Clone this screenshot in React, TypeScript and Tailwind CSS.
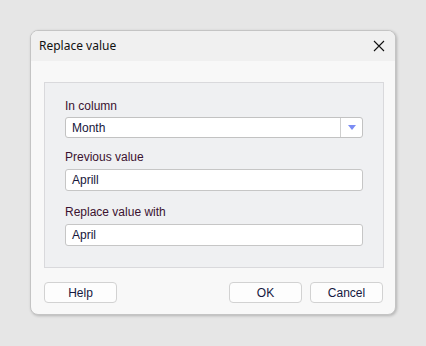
import { ReactNode } from "react"

const labelCls = "h-4 leading-4 text-[12px] text-[#3b1230]"

function Field({ children }: { children: ReactNode }) {
  return (
    <div className="h-[22px] flex items-center rounded-[3px] border border-[#c6c6c6] bg-white px-[6px] text-[12px] text-[#16163a]">
      {children}
    </div>
  )
}

function Button({ label, className = "" }: { label: string; className?: string }) {
  return (
    <button
      className={
        "h-[21px] flex items-center justify-center rounded-[4px] border border-[#d2d2d2] bg-[#fdfdfd] text-[12px] text-[#15183f] " +
        className
      }
    >
      {label}
    </button>
  )
}

export default function App() {
  return (
    <div
      className="w-[426px] h-[346px] bg-[#e6e6e6] pt-[30px] pl-[30px]"
      style={{ fontFamily: '"Liberation Sans", Arial, sans-serif' }}
    >
      <div className="w-[366px] h-[285px] flex flex-col rounded-[8px] border border-[#c4c4c4] bg-[#f8f8f8] overflow-hidden shadow-[1px_1px_3px_rgba(0,0,0,0.22)]">
        {/* Title bar */}
        <div className="h-[30px] shrink-0 flex items-center justify-between bg-[#f0f0f0] pl-[8px] pr-[9px]">
          <span
            className="text-[12px] text-[#111]"
            style={{ fontFamily: '"Noto Sans", "Open Sans", sans-serif' }}
          >
            Replace value
          </span>
          <svg width="12" height="12" viewBox="0 0 12 12" className="mr-[1px]">
            <path d="M1 1 L11 11 M11 1 L1 11" stroke="#111" strokeWidth="1.1" />
          </svg>
        </div>

        {/* Body */}
        <div className="flex-1 flex flex-col pt-[21px] pl-[13px] pr-[11px]">
          <div className="h-[186px] border border-[#d9d9dc] bg-[#eff0f2] pt-[15px] pl-[20px] pr-[20px]">
            <div className={labelCls}>In column</div>
            <div className="mt-[3px] h-[21px] flex rounded-[3px] border border-[#c2c2c2] bg-white text-[12px] text-[#16163a]">
              <div className="flex-1 flex items-center px-[6px]">Month</div>
              <div className="w-[22px] flex items-center justify-center border-l border-[#cfcfcf]">
                <svg width="8" height="5" viewBox="0 0 8 5">
                  <path d="M0 0 H8 L4 5 Z" fill="#7b8cf4" />
                </svg>
              </div>
            </div>

            <div className={labelCls + " mt-[11px]"}>Previous value</div>
            <div className="mt-[4px]">
              <Field>Aprill</Field>
            </div>

            <div className={labelCls + " mt-[13px]"}>Replace value with</div>
            <div className="mt-[4px]">
              <Field>April</Field>
            </div>
          </div>

          <div className="mt-[14px] flex">
            <Button label="Help" className="w-[73px]" />
            <div className="flex-1" />
            <Button label="OK" className="w-[73px]" />
            <Button label="Cancel" className="w-[73px] ml-[8px] mr-[1px]" />
          </div>
        </div>
      </div>
    </div>
  )
}
